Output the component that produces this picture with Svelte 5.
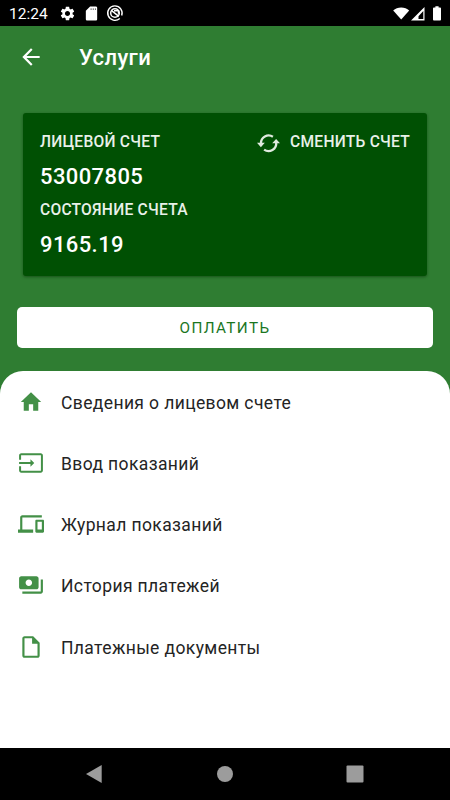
<script>
  const items = [
    { label: 'Сведения о лицевом счете', path: 'M10 20v-6h4v6h4.700v-8h2.700L12 3l-9.400 9h2.700v8z' },
    { label: 'Ввод показаний', path: 'M21 3H3c-1.100 0-2 .9-2 2v4h1.850V4.850h18.300v14.300H2.850V15H1v4c0 1.100.9 2 2 2h18c1.100 0 2-.9 2-2V5c0-1.100-.9-2-2-2zM11.500 15.500l3.500-3.500-3.500-3.500v2.600H1v1.800h10.500z' },
    { label: 'Журнал показаний', path: 'M4 6h18V4H4c-1.100 0-2 .9-2 2v11H0v3h14v-3H4V6zm19 2h-6c-.55 0-1 .45-1 1v10c0 .55.45 1 1 1h6c.55 0 1-.45 1-1V9c0-.55-.45-1-1-1zm-1 9h-4v-7h4v7z' },
    { label: 'История платежей', path: 'M19 14V6c0-1.100-.9-2-2-2H3c-1.100 0-2 .9-2 2v8c0 1.100.9 2 2 2h14c1.100 0 2-.9 2-2zm-9-1c-1.660 0-3-1.340-3-3s1.340-3 3-3 3 1.340 3 3-1.340 3-3 3zm13-6v11c0 1.100-.9 2-2 2H4v-2h17V7h2z' },
    { label: 'Платежные документы', path: 'M14 2H6c-1.100 0-2 .9-2 2v16c0 1.100.9 2 2 2h12c1.100 0 2-.9 2-2V8l-6-6zM6 20V4h7v5h5v11H6z' }
  ];
</script>

<div class="screen">
  <div class="status">
    <span class="time">12:24</span>
    <svg class="gear" width="17" height="17" viewBox="0 0 24 24"><path d="M19.14 12.94c.04-.3.06-.61.06-.94 0-.32-.02-.64-.07-.94l2.03-1.58c.18-.14.23-.41.12-.61l-1.92-3.32c-.12-.22-.37-.29-.59-.22l-2.39.96c-.5-.38-1.03-.7-1.62-.94l-.36-2.54c-.04-.24-.24-.41-.48-.41h-3.84c-.24 0-.43.17-.47.41l-.36 2.54c-.59.24-1.13.57-1.62.94l-2.39-.96c-.22-.08-.47 0-.59.22L2.74 8.87c-.12.21-.08.47.12.61l2.03 1.58c-.05.3-.09.63-.09.94s.02.64.07.94l-2.03 1.58c-.18.14-.23.41-.12.61l1.92 3.32c.12.22.37.29.59.22l2.39-.96c.5.38 1.03.7 1.62.94l.36 2.54c.05.24.24.41.48.41h3.84c.24 0 .44-.17.47-.41l.36-2.54c.59-.24 1.13-.56 1.62-.94l2.39.96c.22.08.47 0 .59-.22l1.92-3.32c.12-.22.07-.47-.12-.61l-2.01-1.58zM12 15.6c-1.98 0-3.6-1.62-3.6-3.6s1.62-3.6 3.6-3.6 3.6 1.62 3.6 3.6-1.62 3.6-3.6 3.6z"/></svg>
    <svg class="sd" width="17" height="17" viewBox="0 0 24 24"><path d="M18 2h-8L4 8v12c0 1.1.9 2 2 2h12c1.1 0 2-.9 2-2V4c0-1.1-.9-2-2-2zm-6 4.800h-1.200V5H12zm3 0h-1.200V5H15zm3 0h-1.200V5H18z"/></svg>
    <svg class="dnd" width="18" height="18" viewBox="0 0 18 18"><g fill="none" stroke="#fff"><path d="M13.800 14.400A7.200 7.200 0 1 1 15.700 11.500" stroke-width="1.400"/><circle cx="9" cy="9" r="4.300" stroke-width="1.500"/><path d="M5.300 6.300 12.800 12.300M8 6.800h4.500v3" stroke-width="1.500"/></g></svg>
    <span class="grow"></span>
    <svg width="50" height="18" viewBox="0 0 50 18"><path d="M1.200 6.600C5.200 2.500 13.200 2.500 17.200 6.600L9.200 15.600z"/><path fill-rule="evenodd" d="M32.500 3V16.500H19zM31.300 7 26.500 12.200v2.900h4.800z"/><path d="M41.900 3.500h1.500V2.200h3.200v1.300h1.500q.9 0 .9.900V15.600q0 .9-.9.900h-6.200q-.9 0-.9-.9V4.400q0-.9.900-.9z"/></svg>
  </div>

  <header>
    <svg width="26" height="26" viewBox="0 0 24 24"><path d="M20 11H7.830l5.590-5.590L12 4l-8 8 8 8 1.410-1.410L7.830 13H20v-2z"/></svg>
    <h1>Услуги</h1>
  </header>

  <section class="card">
    <div class="row">
      <span class="label">ЛИЦЕВОЙ СЧЕТ</span>
      <button class="change">
        <svg width="24" height="22" viewBox="0 0 24 22"><g fill="none" stroke="#dfeadf" stroke-width="2.300"><path d="M5 10.500A7.700 7.700 0 0 1 16.900 3.700"/><path d="M20.200 9.500A7.700 7.700 0 0 1 8.100 16.600"/></g><path fill="#dfeadf" d="M1 9.800h7.800l-3.900 4.400zM16.200 10.300H24l-3.900-4.400z"/></svg>
        <span class="label">СМЕНИТЬ СЧЕТ</span>
      </button>
    </div>
    <strong>53007805</strong>
    <span class="label state">СОСТОЯНИЕ СЧЕТА</span>
    <strong class="sum">9165.19</strong>
  </section>

  <button class="pay">ОПЛАТИТЬ</button>

  <main>
    {#each items as item}
      <div class="item">
        <svg width="26" height="26" viewBox="0 0 24 24"><path d={item.path} /></svg>
        <span>{item.label}</span>
      </div>
    {/each}
  </main>

  <nav>
    <svg width="18" height="20" viewBox="0 0 18 20"><path d="M1 10 16.700 1v18z"/></svg>
    <svg width="18" height="20" viewBox="0 0 18 20"><circle cx="9" cy="10" r="8"/></svg>
    <svg width="18" height="20" viewBox="0 0 18 20"><rect x=".5" y="1.500" width="17" height="17" rx="1"/></svg>
  </nav>
</div>

<style>
  :global(body) { margin: 0; }
  .screen {
    width: 450px; height: 800px; overflow: hidden;
    display: flex; flex-direction: column;
    background: #2f7d32; color: #fff;
    font-family: Roboto, "Liberation Sans", sans-serif;
  }
  svg { display: block; flex: none; fill: currentColor; }
  button { border: 0; padding: 0; font: inherit; color: inherit; background: none; }
  .status {
    height: 26px; flex: none; box-sizing: border-box; background: #000;
    display: flex; align-items: center; padding: 0 8px 0 9px;
  }
  .time { width: 49.500px; font-size: 15.500px; line-height: 26px; padding-top: 2px; }
  .sd { margin-left: 7px; }
  .dnd { margin-left: 6.500px; }
  .grow { flex: 1; }
  header { height: 63px; flex: none; display: flex; align-items: center; padding-left: 17.500px; }
  header svg { margin-top: -1px; }
  h1 { margin: 1px 0 0 35.500px; font-size: 22px; line-height: 30px; font-weight: 500; letter-spacing: .4px; }
  .card {
    margin: 24px 23px 0; height: 162.500px; flex: none; box-sizing: border-box;
    padding: 18px 17px; background: #005003; border-radius: 3px;
    box-shadow: 0 1px 3px rgba(0, 40, 0, .5);
    display: flex; flex-direction: column;
  }
  .row { display: flex; justify-content: space-between; height: 22px; }
  .label { font-size: 15.600px; font-weight: 500; line-height: 23px; letter-spacing: .23px; color: #e9f1e9; white-space: nowrap; }
  .change { display: flex; gap: 10px; height: 23px; }
  .change svg { margin-top: 2px; }
  strong { font-size: 22px; line-height: 26px; font-weight: 500; margin-top: 11px; letter-spacing: .4px; }
  .state { margin-top: 9px; }
  .sum { margin-top: 10px; }
  .pay {
    margin: 31.500px 17px 0; height: 41px; flex: none;
    background: #fff; border-radius: 5px; color: #1b761f;
    font-size: 15.300px; line-height: 42px; letter-spacing: 1.350px; text-align: center;
  }
  main {
    margin-top: 23px; flex: 1; box-sizing: border-box; background: #fff;
    border-radius: 23px 23px 0 0; color: #242424;
  }
  .item { display: flex; align-items: center; height: 61.250px; padding-left: 17.500px; }
  .item svg { color: #439047; }
  .item span { margin-left: 17.500px; font-size: 17.500px; line-height: 24px; letter-spacing: .38px; margin-top: 2px; white-space: nowrap; }
  nav {
    height: 52px; flex: none; background: #000; color: #9c9c9c;
    display: flex; align-items: center; justify-content: space-between;
    box-sizing: border-box; padding: 0 86px 0 85px;
  }
</style>
